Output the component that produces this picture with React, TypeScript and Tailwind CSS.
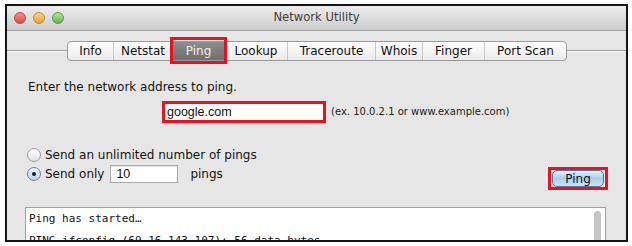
import React from "react";

const tabs: { label: string; w: number; sel?: boolean }[] = [
  { label: "Info", w: 45 },
  { label: "Netstat", w: 59 },
  { label: "Ping", w: 53, sel: true },
  { label: "Lookup", w: 62 },
  { label: "Traceroute", w: 88 },
  { label: "Whois", w: 47 },
  { label: "Finger", w: 62 },
  { label: "Port Scan", w: 82 },
];

function Radio({ checked }: { checked?: boolean }) {
  return (
    <div
      className={
        "flex h-[14px] w-[14px] items-center justify-center rounded-full border " +
        (checked
          ? "border-[#6b7f99] bg-gradient-to-b from-[#eef5fd] to-[#b9d3ef]"
          : "border-[#9a9a9a] bg-gradient-to-b from-white to-[#e2e2e2]")
      }
    >
      {checked && <div className="h-[4px] w-[4px] rounded-full bg-[#1c1c1c]" />}
    </div>
  );
}

export default function App() {
  return (
    <div
      className="h-[246px] w-[632px] bg-white pl-[5px] pt-[4px]"
      style={{ fontFamily: '"DejaVu Sans", sans-serif' }}
    >
      <div className="flex h-[238px] w-[623px] flex-col overflow-hidden border-2 border-[#151515] bg-[#e6e6e6]">
        {/* Title bar */}
        <div className="grid h-[25px] shrink-0 grid-cols-[1fr_auto_1fr] items-center border-b border-[#a2a2a2] bg-gradient-to-b from-[#ececec] to-[#cdcdcd]">
          <div className="flex items-center gap-[7px] pl-[7px]">
            <div className="h-[12px] w-[12px] rounded-full border border-[#b84a45] bg-gradient-to-b from-[#f1938d] to-[#dd4a42]" />
            <div className="h-[12px] w-[12px] rounded-full border border-[#c0892f] bg-gradient-to-b from-[#f7d48a] to-[#e4a235]" />
            <div className="h-[12px] w-[12px] rounded-full border border-[#5b9a3f] bg-gradient-to-b from-[#b8e59a] to-[#5fb546]" />
          </div>
          <div className="text-[11.6px] leading-none text-[#3d3d3d]">Network Utility</div>
          <div />
        </div>

        {/* Tabs */}
        <div className="mt-[10px] flex h-[20px] shrink-0 items-center">
          <div className="h-[2px] w-[60px] border-t border-[#9f9f9f] border-b-[#f4f4f4] border-b" />
          <div className="flex h-[20px] w-[500px] rounded-[4px] border border-[#9a9a9a] bg-gradient-to-b from-white to-[#ebebeb]">
            {tabs.map((t, i) => (
              <div
                key={t.label}
                style={{ width: t.w }}
                className={
                  "relative flex items-center justify-center text-[12px] leading-none " +
                  (i > 0 && !t.sel && !tabs[i - 1].sel ? "border-l border-[#c9c9c9] " : "") +
                  (t.sel
                    ? "bg-gradient-to-b from-[#8d8d8d] to-[#6f6f6f] text-[#ededed]"
                    : "text-[#111]")
                }
              >
                {t.label}
                {t.sel && (
                  <div className="absolute bottom-[-4px] left-[-2px] right-[-2px] top-[-5px] border-[3px] border-[#e5131d]" />
                )}
              </div>
            ))}
          </div>
          <div className="h-[2px] flex-1 border-t border-[#9f9f9f] border-b-[#f4f4f4] border-b" />
        </div>

        {/* Label */}
        <div className="mt-[19px] pl-[21px] text-[12px] leading-[15px] text-[#141414]">
          Enter the network address to ping.
        </div>

        {/* Address row */}
        <div className="mt-[6px] flex items-center pl-[155px]">
          <div className="flex h-[22px] w-[164px] items-center border-[3px] border-[#e5131d] bg-white pl-[2px]">
            <span
              className="text-[12.5px] leading-none text-[#111]"
              style={{ fontFamily: '"Liberation Sans", Arial, sans-serif' }}
            >
              google.com
            </span>
          </div>
          <span className="ml-[5px] text-[10px] leading-none text-[#222]">
            (ex. 10.0.2.1 or www.example.com)
          </span>
        </div>

        {/* Radio 1 */}
        <div className="mt-[24px] flex h-[15px] items-center gap-[4px] pl-[20px] text-[12px] text-[#141414]">
          <Radio />
          <span>Send an unlimited number of pings</span>
        </div>

        {/* Radio 2 + Ping button */}
        <div className="mt-[3px] flex items-start justify-between pl-[20px] pr-[18px]">
          <div className="flex h-[18px] items-center text-[12px] text-[#141414]">
            <Radio checked />
            <span className="ml-[4px]">Send only</span>
            <div className="ml-[6px] flex h-[18px] w-[68px] items-center border border-[#a9a9a9] bg-white pl-[5px] shadow-[inset_0_1px_1px_rgba(0,0,0,0.12)]">
              <span
                className="text-[12.5px] leading-none text-[#111]"
                style={{ fontFamily: '"Liberation Sans", Arial, sans-serif' }}
              >
                10
              </span>
            </div>
            <span className="ml-[12px]">pings</span>
          </div>
          <div className="mt-[2px] flex h-[23px] w-[60px] items-center justify-center border-[3px] border-[#e5131d]">
            <div className="flex h-[17px] w-[52px] items-center justify-center rounded-[5px] border border-[#56779f] bg-gradient-to-b from-[#e3effb] via-[#a9cdef] to-[#cbe3f9] text-[12px] leading-none text-[#111]">
              Ping
            </div>
          </div>
        </div>

        {/* Output */}
        <div className="relative ml-[18px] mr-[20px] mt-[17px] flex-1 border border-[#a0a0a0] bg-white pl-[3px] pt-[5px]">
          <div
            className="text-[11px] leading-[11px] text-[#111]"
            style={{ fontFamily: '"DejaVu Sans Mono", monospace' }}
          >
            <div>Ping has started…</div>
            <div>&nbsp;</div>
            <div>PING ifconfig (69.16.143.107): 56 data bytes</div>
          </div>
          <div className="absolute right-[4px] top-[3px] h-[60px] w-[7px] rounded-full bg-[#c4c4c4]" />
        </div>
      </div>
    </div>
  );
}
